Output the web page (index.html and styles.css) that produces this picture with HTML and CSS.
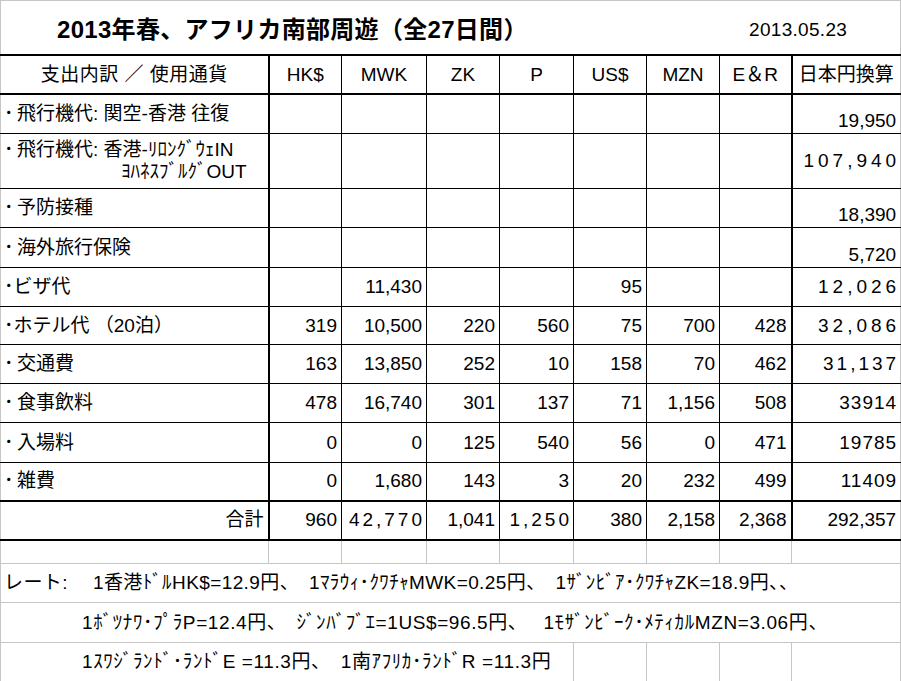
FILE: index.html
```html
<!DOCTYPE html>
<html lang="ja">
<head>
<meta charset="utf-8">
<title>2013年春、アフリカ南部周遊</title>
<link rel="stylesheet" href="styles.css">
</head>
<body>
<table class="sheet">
  <colgroup>
    <col class="c-lab"><col class="c-hk"><col class="c-mwk"><col class="c-zk"><col class="c-p"><col class="c-us"><col class="c-mzn"><col class="c-er"><col class="c-jpy">
  </colgroup>
  <tr class="h54">
    <td colspan="9" class="title-cell">
      <div class="title-bar">
        <span class="title">2013年春、アフリカ南部周遊（全27日間）</span>
        <span class="date">2013.05.23</span>
      </div>
    </td>
  </tr>
  <tr class="h39 head">
    <td class="lab center">支出内訳 ／ 使用通貨</td>
    <td>HK$</td><td>MWK</td><td>ZK</td><td>P</td><td>US$</td><td>MZN</td><td>E＆R</td>
    <td class="jpy">日本円換算</td>
  </tr>
  <tr class="h40 body">
    <td class="lab"><span class="bl">･</span>飛行機代: 関空-香港 往復</td>
    <td></td><td></td><td></td><td></td><td></td><td></td><td></td>
    <td class="jpy bot">19,950</td>
  </tr>
  <tr class="h55 body">
    <td class="lab"><div><span class="bl">･</span>飛行機代: 香港-ﾘﾛﾝｸﾞｳｪIN</div><div class="line2">ﾖﾊﾈｽﾌﾞﾙｸﾞOUT</div></td>
    <td></td><td></td><td></td><td></td><td></td><td></td><td></td>
    <td class="jpy"><span class="ls4">107,940</span></td>
  </tr>
  <tr class="h39 body">
    <td class="lab"><span class="bl">･</span>予防接種</td>
    <td></td><td></td><td></td><td></td><td></td><td></td><td></td>
    <td class="jpy bot">18,390</td>
  </tr>
  <tr class="h40 body">
    <td class="lab"><span class="bl">･</span>海外旅行保険</td>
    <td></td><td></td><td></td><td></td><td></td><td></td><td></td>
    <td class="jpy bot">5,720</td>
  </tr>
  <tr class="h39 body">
    <td class="lab">･ビザ代</td>
    <td></td><td>11,430</td><td></td><td></td><td>95</td><td></td><td></td>
    <td class="jpy"><span class="ls4">12,026</span></td>
  </tr>
  <tr class="h38 body">
    <td class="lab">･ホテル代 （20泊）</td>
    <td>319</td><td>10,500</td><td>220</td><td>560</td><td>75</td><td>700</td><td>428</td>
    <td class="jpy"><span class="ls4">32,086</span></td>
  </tr>
  <tr class="h39 body">
    <td class="lab"><span class="bl">･</span>交通費</td>
    <td>163</td><td>13,850</td><td>252</td><td>10</td><td>158</td><td>70</td><td>462</td>
    <td class="jpy"><span class="ls3">31,137</span></td>
  </tr>
  <tr class="h39 body">
    <td class="lab"><span class="bl">･</span>食事飲料</td>
    <td>478</td><td>16,740</td><td>301</td><td>137</td><td>71</td><td>1,156</td><td>508</td>
    <td class="jpy"><span class="ls1">33914</span></td>
  </tr>
  <tr class="h40 body">
    <td class="lab"><span class="bl">･</span>入場料</td>
    <td>0</td><td>0</td><td>125</td><td>540</td><td>56</td><td>0</td><td>471</td>
    <td class="jpy"><span class="ls1">19785</span></td>
  </tr>
  <tr class="h38 body">
    <td class="lab"><span class="bl">･</span>雑費</td>
    <td>0</td><td>1,680</td><td>143</td><td>3</td><td>20</td><td>232</td><td>499</td>
    <td class="jpy"><span class="ls1">11409</span></td>
  </tr>
  <tr class="h39 body total">
    <td class="lab right">合計</td>
    <td>960</td><td><span class="ls3">42,770</span></td><td>1,041</td><td><span class="ls3">1,250</span></td><td>380</td><td>2,158</td><td>2,368</td>
    <td class="jpy">292,357</td>
  </tr>
  <tr class="h24 grid">
    <td class="lab"></td>
    <td></td><td></td><td></td><td></td><td></td><td></td><td></td><td class="jpy"></td>
  </tr>
  <tr class="h39 grid">
    <td colspan="9" class="lab rate r1">レート:　 1香港ﾄﾞﾙHK$=12.9円、　1ﾏﾗｳｨ･ｸﾜﾁｬMWK=0.25円、　1ｻﾞﾝﾋﾞｱ･ｸﾜﾁｬZK=18.9円、、</td>
  </tr>
  <tr class="h40 grid">
    <td colspan="9" class="lab rate r2">1ﾎﾞﾂﾅﾜ･ﾌﾟﾗP=12.4円、　ｼﾞﾝﾊﾞﾌﾞｴ=1US$=96.5円、　 1ﾓｻﾞﾝﾋﾞｰｸ･ﾒﾃｨｶﾙMZN=3.06円、</td>
  </tr>
  <tr class="h39 grid">
    <td colspan="5" class="lab rate r3">1ｽﾜｼﾞﾗﾝﾄﾞ･ﾗﾝﾄﾞE =11.3円、　1南ｱﾌﾘｶ･ﾗﾝﾄﾞR =11.3円</td>
    <td></td><td></td><td></td><td class="jpy"></td>
  </tr>
</table>
</body>
</html>
```

FILE: styles.css
```css
* { box-sizing: border-box; }

html, body {
  margin: 0;
  padding: 0;
  background: #ffffff;
}

body {
  font-family: "Liberation Sans", "Noto Sans CJK JP", sans-serif;
  font-size: 19px;
  color: #000;
}

.sheet {
  border-collapse: collapse;
  table-layout: fixed;
  width: 900px;
}

.c-lab { width: 268px; }
.c-hk { width: 73px; }
.c-mwk { width: 85px; }
.c-zk { width: 73px; }
.c-p { width: 74px; }
.c-us { width: 73px; }
.c-mzn { width: 73px; }
.c-er { width: 72px; }
.c-jpy { width: 109px; }

.h24 { height: 24px; }
.h38 { height: 38px; }
.h39 { height: 39px; }
.h40 { height: 40px; }
.h54 { height: 54px; }
.h55 { height: 55px; }

.sheet td {
  padding: 0 4px 0 3px;
  line-height: 1.15;
  white-space: nowrap;
  vertical-align: middle;
  text-align: right;
  border-right: 1px solid #000;
  border-bottom: 1px solid #000;
}

.sheet td.lab {
  text-align: left;
  border-left: 1px solid #c6c6c6;
  border-right: 2px solid #000;
}

.sheet td.jpy {
  border-left: 2px solid #000;
  border-right: 1px solid #c6c6c6;
}

.sheet td.center { text-align: center; }
.sheet td.right { text-align: right; }
.sheet td.bot { vertical-align: bottom; padding-bottom: 1px; }

.bl {
  display: inline-block;
  width: 13px;
}

/* title */
.sheet td.title-cell {
  padding: 0;
  border-top: 1px solid #c6c6c6;
  border-left: 1px solid #c6c6c6;
  border-right: 1px solid #c6c6c6;
  border-bottom: 2px solid #000;
  text-align: left;
}

.title-bar {
  display: flex;
  align-items: center;
  padding: 6px 0 0 56px;
}

.title {
  font-size: 24px;
  font-weight: bold;
  letter-spacing: 0.3px;
}

.date {
  margin-left: auto;
  margin-right: 53px;
  font-size: 19px;
  letter-spacing: 0.3px;
}

/* header */
.head td {
  text-align: center;
  border-bottom: 2px solid #000;
  padding: 2px 0 0 0;
}

.head td.lab { padding-left: 0; letter-spacing: 0.5px; }

.line2 { padding-left: 117px; }

/* wide-spaced numbers */
.ls1 { letter-spacing: 1px; margin-right: -1px; }
.ls3 { letter-spacing: 3px; margin-right: -3px; }
.ls4 { letter-spacing: 4px; margin-right: -4px; }

/* total row */
.total td {
  border-top: 2px solid #000;
  border-bottom: 2px solid #000;
}

/* plain grid area */
.grid td {
  border-right: 1px solid #c6c6c6;
  border-bottom: 1px solid #c6c6c6;
}

.grid td.lab { border-right: 1px solid #c6c6c6; }
.grid td.jpy { border-left: 1px solid #c6c6c6; }

.sheet td.rate {
  text-align: left;
  padding-left: 3px;
  letter-spacing: 0.4px;
}

.sheet td.r2,
.sheet td.r3 {
  padding-left: 81px;
  letter-spacing: 0.6px;
}
```
